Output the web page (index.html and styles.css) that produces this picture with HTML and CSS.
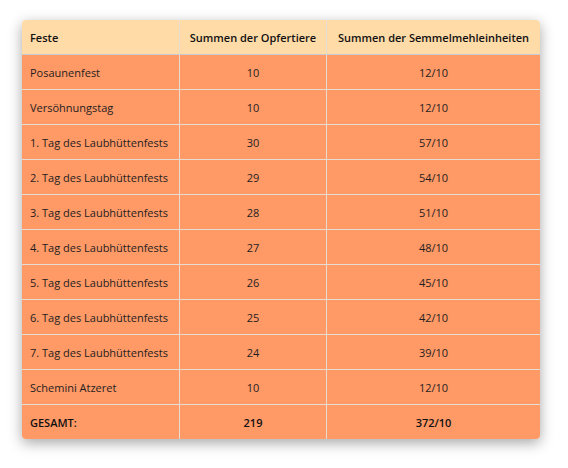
FILE: index.html
```html
<!DOCTYPE html>
<html lang="de">
  <head>
    <meta charset="UTF-8" />
    <title>Feste</title>
    <link rel="stylesheet" href="styles.css">
  </head>
  <body>
    <table class="feste">
      <colgroup>
        <col class="col-name">
        <col class="col-tiere">
        <col class="col-mehl">
      </colgroup>
      <thead>
        <tr>
          <th>Feste</th>
          <th class="num">Summen der Opfertiere</th>
          <th class="num">Summen der Semmelmehleinheiten</th>
        </tr>
      </thead>
      <tbody>
        <tr><td>Posaunenfest</td><td class="num">10</td><td class="num">12/10</td></tr>
        <tr><td>Versöhnungstag</td><td class="num">10</td><td class="num">12/10</td></tr>
        <tr><td>1. Tag des Laubhüttenfests</td><td class="num">30</td><td class="num">57/10</td></tr>
        <tr><td>2. Tag des Laubhüttenfests</td><td class="num">29</td><td class="num">54/10</td></tr>
        <tr><td>3. Tag des Laubhüttenfests</td><td class="num">28</td><td class="num">51/10</td></tr>
        <tr><td>4. Tag des Laubhüttenfests</td><td class="num">27</td><td class="num">48/10</td></tr>
        <tr><td>5. Tag des Laubhüttenfests</td><td class="num">26</td><td class="num">45/10</td></tr>
        <tr><td>6. Tag des Laubhüttenfests</td><td class="num">25</td><td class="num">42/10</td></tr>
        <tr><td>7. Tag des Laubhüttenfests</td><td class="num">24</td><td class="num">39/10</td></tr>
        <tr><td>Schemini Atzeret</td><td class="num">10</td><td class="num">12/10</td></tr>
        <tr class="total"><td>GESAMT:</td><td class="num">219</td><td class="num">372/10</td></tr>
      </tbody>
    </table>
  </body>
</html>
```

FILE: styles.css
```css
body {
  margin: 0;
  padding: 20px 22px;
  background-color: #ffffff;
  font-family: "Open Sans", "DejaVu Sans", sans-serif;
  font-size: 11px;
  color: #1e1e1e;
}
.feste {
  width: 518px;
  table-layout: fixed;
  border-collapse: separate;
  border-spacing: 0;
  border-radius: 4px;
  overflow: hidden;
  box-shadow: 0 4px 14px rgba(0, 0, 0, 0.35);
}
.col-name { width: 158px; }
.col-tiere { width: 147px; }
.col-mehl { width: 213px; }
.feste th,
.feste td {
  height: 34px;
  padding: 0 8px;
  text-align: left;
  white-space: nowrap;
  border-right: 1px solid #e6dcd2;
  border-bottom: 1px solid #e6dcd2;
}
.feste th:last-child,
.feste td:last-child {
  border-right: none;
}
.feste tr:last-child td {
  border-bottom: none;
}
.feste th {
  background-color: #ffdba8;
  font-weight: 600;
  color: #111111;
  border-bottom-color: #c9c9cf;
}
.feste td {
  background-color: #ff9966;
}
.feste .num {
  text-align: center;
}
.total td {
  font-weight: 600;
  color: #111111;
}
```
